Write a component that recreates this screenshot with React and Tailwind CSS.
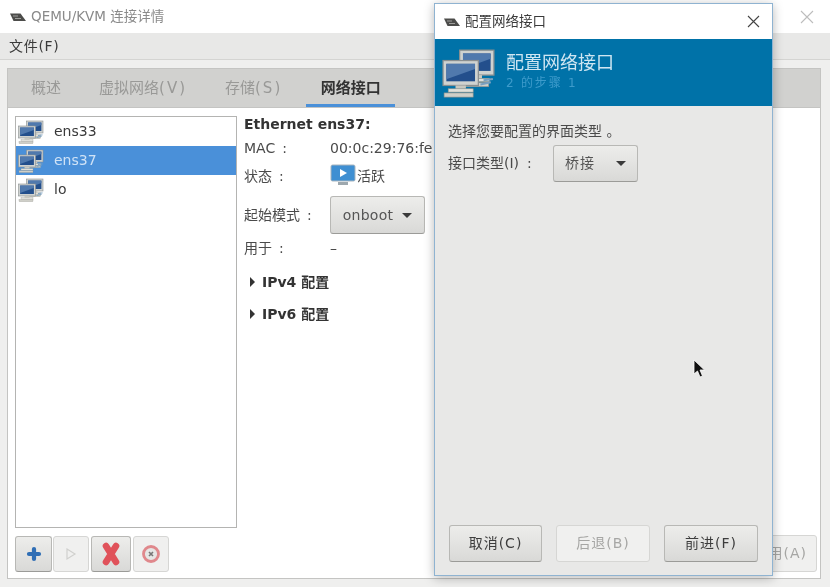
import React from "react";

const FONT = '"DejaVu Sans","Noto Sans CJK SC",sans-serif';

function Monitor({ x, y, w, h }) {
  return (
    <g>
      <rect x={x} y={y} width={w} height={h} fill="#cfd2d0" stroke="#8b8f90" strokeWidth="0.6" />
      <rect x={x + 1.6} y={y + 1.6} width={w - 3.2} height={h - 3.6} fill="#234f8c" />
      <path d={`M${x + 1.6} ${y + 1.6}h${w - 3.2}v${(h - 3.6) * 0.3}L${x + 1.6} ${y + h - 3}z`} fill="#5079ad" />
      <rect x={x + w / 2 - 2.5} y={y + h} width={5} height={1.6} fill="#c8c8c0" />
      <rect x={x + w / 2 - 6} y={y + h + 1.6} width={12} height={1.6} fill="#e0e0da" stroke="#96968e" strokeWidth="0.3" />
      <rect x={x + 0.5} y={y + h + 3.6} width={w - 3} height={2} fill="#cfcfc8" stroke="#8f8f88" strokeWidth="0.3" />
    </g>
  );
}

function NetIcon({ size = 26 }) {
  return (
    <svg width={size} height={size} viewBox="0 0 26 26" className="shrink-0">
      <Monitor x={8.5} y={2} w={16.5} h={12} />
      <path d="M20 16.5l4.5-.6M18.5 18.5l5-1" stroke="#7aa0c0" strokeWidth="1" />
      <Monitor x={0.5} y={7} w={17} h={12} />
    </svg>
  );
}

function WinLogo() {
  return (
    <svg width="16" height="10" viewBox="0 0 16 10" className="shrink-0">
      <path d="M0 1.5h10.5L16 9H3.5z" fill="#4c4c4a" />
      <path d="M3 4l5 0M5 6.5l6 0" stroke="#a8a8a6" strokeWidth="0.9" />
    </svg>
  );
}

function Caret({ className = "" }) {
  return <span className={`inline-block w-0 h-0 border-x-[5px] border-x-transparent border-t-[5px] border-t-[#3a3a3a] ${className}`} />;
}

function Btn({ children, className = "", disabled }) {
  return (
    <div
      className={`flex items-center justify-center rounded-[3px] border text-[14px] tracking-[1px] ${
        disabled
          ? "border-[#d6d6d4] bg-[#f0f0ef] text-[#a6a6a4]"
          : "border-[#b8b8b5] border-b-[#9b9b98] bg-gradient-to-b from-[#ededeb] to-[#d9d9d7] text-[#3d3d3d]"
      } ${className}`}
    >
      {children}
    </div>
  );
}

function Row({ selected, name }) {
  return (
    <div className={`h-[29px] flex items-center pl-[2px] ${selected ? "bg-[#4a90d9] text-[#cfe2f6]" : "text-[#3a3a3a]"}`}>
      <NetIcon />
      <span className="ml-[10px] text-[14px]">{name}</span>
    </div>
  );
}

function Field({ label, gap = "ml-[7px]", children, className = "" }) {
  return (
    <div className={`flex items-center text-[14px] text-[#4a4a4a] ${className}`}>
      <span className="w-[86px] shrink-0 whitespace-nowrap">
        {label}
        <span className={gap}>:</span>
      </span>
      {children}
    </div>
  );
}

function Tab({ children, active, className = "" }) {
  return (
    <div
      className={`h-full flex items-center text-[15px] ${
        active ? "font-bold text-[#333] border-b-[3px] border-[#4a90d9] pt-[3px]" : "text-[#999997]"
      } ${className}`}
    >
      {children}
    </div>
  );
}

function Disclosure({ children }) {
  return (
    <div className="flex items-center h-[20px] ml-[6px] text-[14px] font-bold text-[#333]">
      <span className="w-0 h-0 border-y-[5px] border-y-transparent border-l-[5px] border-l-[#333] mr-[7px]" />
      {children}
    </div>
  );
}

export default function App() {
  return (
    <div className="relative w-[830px] h-[587px] overflow-hidden bg-[#efefee] blur-[0.6px]" style={{ fontFamily: FONT }}>
      <div className="h-[33px] bg-white flex items-center pl-[10px] pr-[16px] text-[13.5px] text-[#8a8a8a]">
        <WinLogo />
        <span className="ml-[5px]">QEMU/KVM 连接详情</span>
        <svg width="14" height="14" viewBox="0 0 14 14" className="ml-auto" stroke="#bdbdbd" strokeWidth="1.1">
          <path d="M1 1l12 12M13 1L1 13" />
        </svg>
      </div>
      <div className="h-[27px] bg-[#e8e8e7] border-b border-[#d4d4d2] flex items-center pl-[9px] text-[14px] text-[#3a3a3a] tracking-[0.7px]">
        文件(F)
      </div>
      <div className="mt-[8px] ml-[7px] w-[814px] h-[511px] border border-[#c4c4c2] flex flex-col bg-white">
        <div className="h-[39px] shrink-0 bg-[#d1d1cf] flex items-center border-b border-[#c4c4c2]">
          <Tab className="ml-[23px]">概述</Tab>
          <Tab className="ml-[38px]">虚拟网络<span className="tracking-[2px]">(V)</span></Tab>
          <Tab className="ml-[38px]">存储<span className="tracking-[2px]">(S)</span></Tab>
          <Tab active className="ml-[24px] px-[14.5px]">网络接口</Tab>
        </div>
        <div className="flex-1 flex min-h-0 pl-[7px] pt-[8px] pb-[6px] pr-[3px]">
          <div className="w-[222px] shrink-0 flex flex-col">
            <div className="flex-1 border border-[#b4b4b2] bg-white">
              <Row name="ens33" />
              <Row name="ens37" selected />
              <Row name="lo" />
            </div>
            <div className="flex mt-[8px] h-[36px]">
              <Btn className="w-[37px]">
                <svg width="16" height="16" viewBox="0 0 16 16"><path d="M8 3v10M3 8h10" stroke="#2f6eb5" strokeWidth="4.2" strokeLinecap="round" /></svg>
              </Btn>
              <Btn disabled className="w-[36px] ml-[1px]">
                <svg width="12" height="14" viewBox="0 0 12 14"><path d="M2 2l8 5-8 5z" fill="none" stroke="#d0d0ce" strokeWidth="1.2" /></svg>
              </Btn>
              <Btn className="w-[40px] ml-[2px]">
                <svg width="22" height="24" viewBox="0 0 22 24"><path d="M6 4l10 16M16 4L6 20" stroke="#e0525a" strokeWidth="6.6" strokeLinecap="round" /></svg>
              </Btn>
              <Btn disabled className="w-[36px] ml-[2px]">
                <svg width="20" height="20" viewBox="0 0 20 20">
                  <circle cx="10" cy="10" r="7.5" fill="#e6e6e5" stroke="#e0888c" strokeWidth="2.8" />
                  <path d="M8 8l4 4M12 8l-4 4" stroke="#777" strokeWidth="1.6" />
                </svg>
              </Btn>
            </div>
          </div>
          <div className="flex-1 flex flex-col min-w-0 pl-[7px] relative">
            <div className="flex-1 min-h-0 overflow-hidden">
              <div className="text-[14px] font-bold text-[#333] h-[16px] leading-[16px]">Ethernet ens37:</div>
              <Field label="MAC" className="mt-[8px] h-[17px]">
                <span className="whitespace-nowrap">00:0c:29:76:fe:8f</span>
              </Field>
              <Field label="状态" className="mt-[7px] h-[24px]">
                <svg width="26" height="24" viewBox="0 0 26 24" className="shrink-0">
                  <rect x="1" y="1" width="24" height="16" rx="1.5" fill="#3f8fd2" stroke="#a8b4bd" />
                  <path d="M10 5l7 4-7 4z" fill="#fff" />
                  <rect x="8" y="18" width="10" height="3" fill="#9ea8ae" />
                </svg>
                <span className="ml-[1px]">活跃</span>
              </Field>
              <Field label="起始模式" className="mt-[8px] h-[38px]">
                <Btn className="w-[95px] h-[38px] gap-[9px] text-[#555]">
                  <span className="tracking-[0.3px]">onboot</span>
                  <Caret />
                </Btn>
              </Field>
              <Field label="用于" className="mt-[6px] h-[17px]">
                <span>–</span>
              </Field>
              <div className="mt-[15px]"><Disclosure>IPv4 配置</Disclosure></div>
              <div className="mt-[12px]"><Disclosure>IPv6 配置</Disclosure></div>
            </div>
            <div className="flex justify-end h-[37px]">
              <Btn disabled className="w-[110px] justify-end pr-[9px] text-[#8f8f8d]">应用(A)</Btn>
            </div>
          </div>
        </div>
      </div>

      <div className="absolute left-[434px] top-[3px] w-[339px] h-[573px] flex flex-col border border-[#8fb3d1] bg-[#e8e8e7] shadow-[0_2px_10px_rgba(0,0,0,0.28)]">
        <div className="h-[35px] shrink-0 bg-white flex items-center pl-[9px] pr-[12px] text-[13.5px] text-[#3a3a3a]">
          <WinLogo />
          <span className="ml-[5px]">配置网络接口</span>
          <svg width="13" height="13" viewBox="0 0 13 13" className="ml-auto" stroke="#444" strokeWidth="1.1">
            <path d="M1 1l11 11M12 1L1 12" />
          </svg>
        </div>
        <div className="h-[67px] shrink-0 bg-[#0072a8] flex items-center pl-[7px]">
          <NetIcon size={54} />
          <div className="ml-[10px] -mt-[3px]">
            <div className="text-[18px] leading-[24px] text-[#cfe6f2]">配置网络接口</div>
            <div className="text-[12px] leading-[16px] tracking-[1.8px] text-[#3d9bcb]">2 的步骤 1</div>
          </div>
        </div>
        <div className="flex-1 flex flex-col pl-[14px] pr-[14px] pb-[13px] pt-[16px] text-[14px] text-[#4a4a4a]">
          <div className="h-[18px] leading-[18px] -ml-[1px]">选择您要配置的界面类型 。</div>
          <div className="flex items-center mt-[5px] h-[37px] -ml-[1px]">
            <span className="w-[105px] shrink-0 whitespace-nowrap">接口类型(I)<span className="ml-[8px]">:</span></span>
            <Btn className="w-[85px] h-[37px] gap-[21px] text-[#555]">
              桥接
              <Caret />
            </Btn>
          </div>
          <div className="mt-auto flex justify-between h-[37px]">
            <Btn className="w-[93px]">取消(C)</Btn>
            <Btn disabled className="w-[94px]">后退(B)</Btn>
            <Btn className="w-[94px]">前进(F)</Btn>
          </div>
        </div>
      </div>

      <svg width="13" height="19" viewBox="0 0 13 19" className="absolute left-[693px] top-[359px]">
        <path d="M1 1v14l3.5-3 2.5 6 2.5-1-2.5-6h4.5z" fill="#111" stroke="#fff" strokeWidth="0.8" />
      </svg>
    </div>
  );
}
